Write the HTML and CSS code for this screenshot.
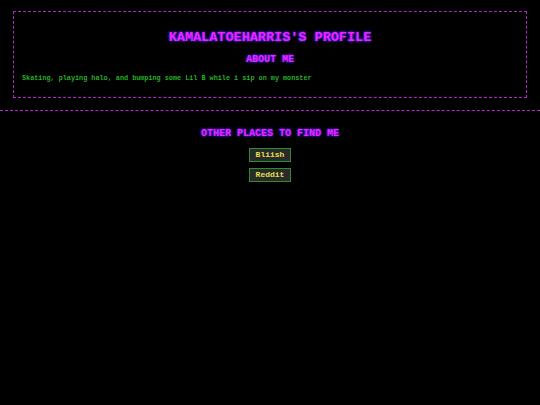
FILE: index.html
```html
<!DOCTYPE html>
<html>
<head>
<meta charset="utf-8">
<link rel="stylesheet" href="styles.css">
</head>
<body>
<div class="profile">
  <h1 class="title">KAMALATOEHARRIS'S PROFILE</h1>
  <h2 class="heading">ABOUT ME</h2>
  <p class="bio">Skating, playing halo, and bumping some Lil B while i sip on my monster</p>
</div>
<hr class="divider">
<div class="links">
  <h2 class="heading">OTHER PLACES TO FIND ME</h2>
  <a class="btn">Bliish</a>
  <a class="btn">Reddit</a>
</div>
</body>
</html>
```
FILE: styles.css
```css
body {
  margin: 0;
  background: #000;
  font-family: "Liberation Mono", "DejaVu Sans Mono", monospace;
}
.profile {
  margin: 11px 13px 0;
  border: 1.5px dashed #b028c8;
  padding: 18px 8px 15px;
}
.title {
  margin: 0;
  text-align: center;
  font-size: 13.5px;
  line-height: 16px;
  font-weight: bold;
  color: #f020ff;
  text-shadow: 0 0 2px #5020ff, 0 0 3px #4040ff;
}
.heading {
  margin: 8px 0 0;
  text-align: center;
  font-size: 10px;
  line-height: 12px;
  font-weight: bold;
  color: #f020ff;
  text-shadow: 0 0 2px #5020ff, 0 0 3px #4040ff;
}
.bio {
  margin: 8px 0 0;
  font-size: 6.8px;
  line-height: 8px;
  font-weight: bold;
  color: #28b028;
}
.divider {
  margin: 12px 0 0;
  border: 0;
  border-top: 1.5px dashed #b028c8;
  height: 0;
}
.links {
  display: flex;
  flex-direction: column;
  align-items: center;
}
.links .heading {
  margin-top: 17px;
}
.btn {
  margin-top: 8px;
  font-size: 8px;
  line-height: 10px;
  font-weight: bold;
  padding: 1px 6px;
  border: 1px solid #2e8b2e;
  background: #2a2a2a;
  color: #e0e050;
}
.btn + .btn {
  margin-top: 6px;
}
```
